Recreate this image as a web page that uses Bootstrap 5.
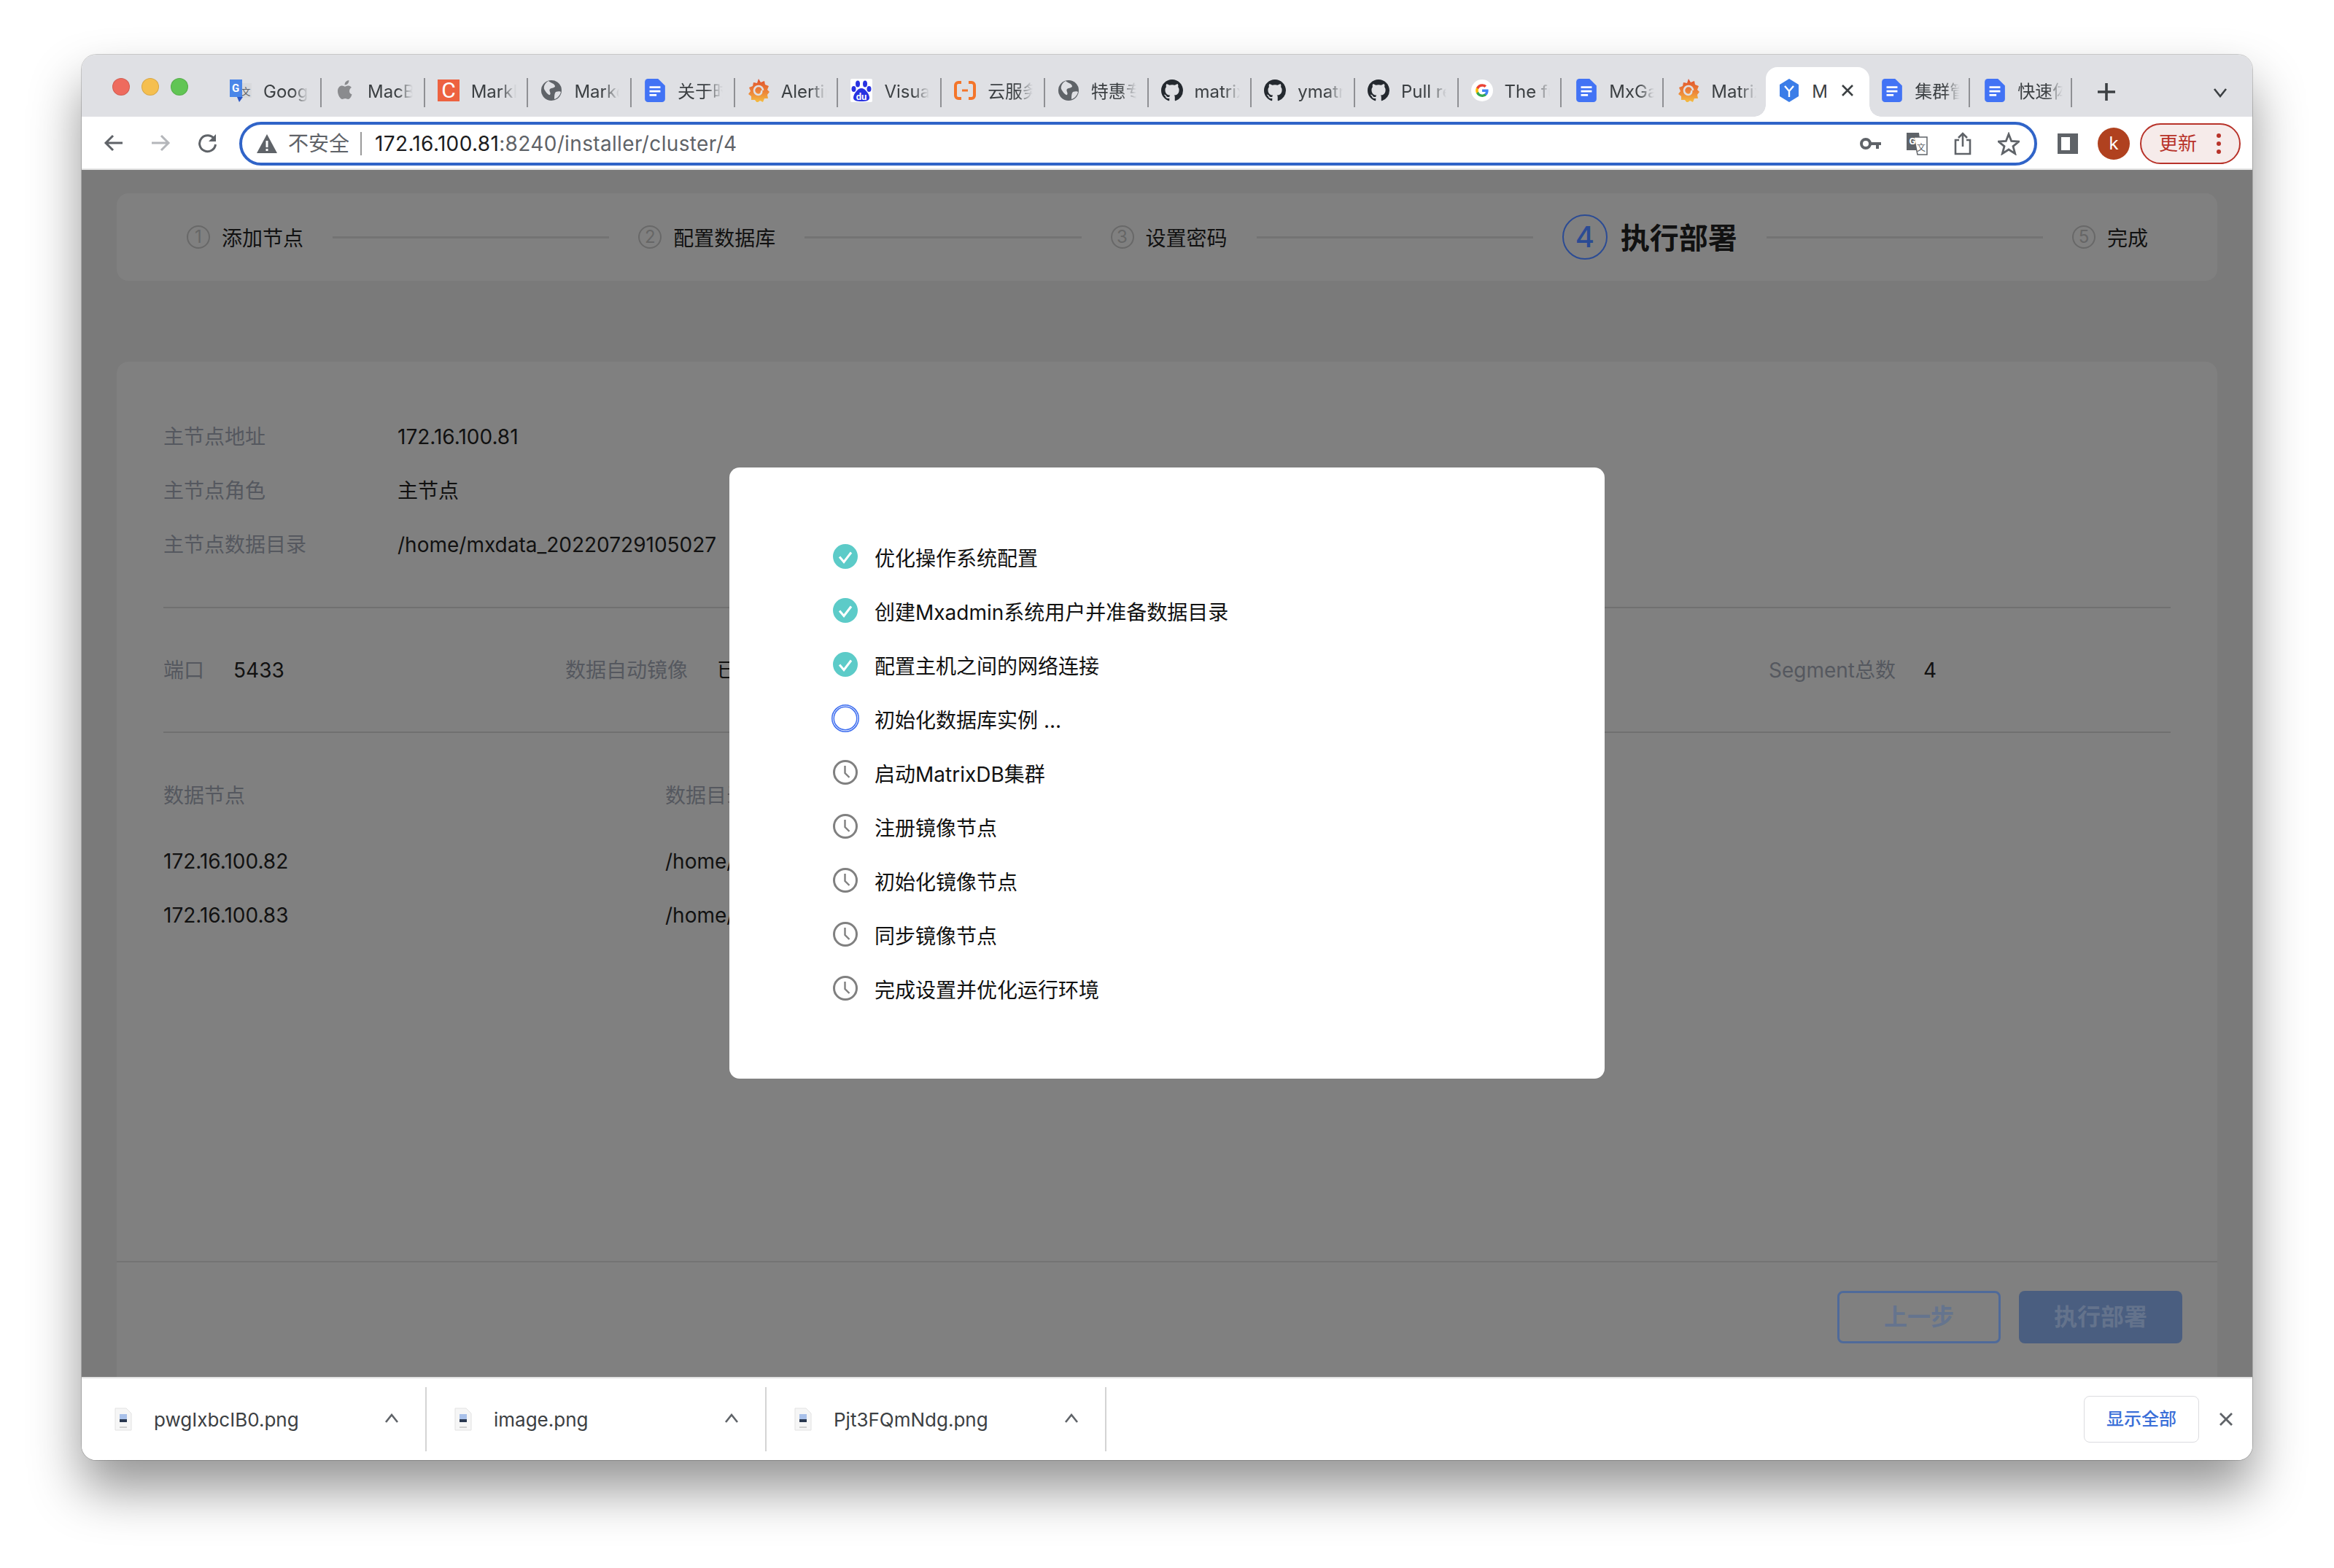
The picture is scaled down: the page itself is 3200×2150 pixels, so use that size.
<!DOCTYPE html>
<html lang="zh-CN">
<head>
  <meta charset="UTF-8" />
  <meta name="viewport" content="width=device-width, initial-scale=1" />
  <title>MatrixDB 安装</title>
  <link href="https://cdn.jsdelivr.net/npm/bootstrap@5.3.3/dist/css/bootstrap.min.css" rel="stylesheet" />
  <style>
    body {
      background: #fff;
      font-family: Inter, "Noto Sans CJK SC", sans-serif;
      color: #111;
      margin: 0;
      height: 2150px;
      overflow: hidden;
    }
    /* browser window */
    .win {
      margin: 75px 112px 0;
      height: 1927px;
      border-radius: 20px;
      overflow: hidden;
      background: #fff;
      box-shadow: 0 0 0 1px rgba(0,0,0,.18), 0 40px 70px rgba(0,0,0,.42);
    }
    .tabstrip { height: 85px; background: #dfe0e4; padding-left: 183px; flex: none; }
    .lights { left: 42px; top: 32px; gap: 16px; }
    .light { width: 24px; height: 24px; border-radius: 50%; border: 1px solid rgba(0,0,0,.12); }
    .tabitem {
      width: 141.7px;
      height: 68px;
      padding: 0 0 4px 17px;
      flex: none;
      position: relative;
      font-size: 24px;
      color: #3c4043;
    }
    .tabitem.tabfirst { width: 146px; padding-left: 20px; }
    .tabitem.slim { width: 140px; padding-left: 19px; }
    .tabitem.slimmer { width: 138px; padding-left: 16px; }
    .tabitem::after {
      content: "";
      position: absolute;
      right: 0;
      top: 15px;
      height: 40px;
      width: 2px;
      background: #8f9094;
    }
    .tabitem.nosep::after { display: none; }
    .tabfav { width: 30px; height: 32px; flex: none; margin-right: 16px; }
    .tabname {
      width: 62px;
      padding-top: 3px;
      white-space: nowrap;
      overflow: hidden;
      -webkit-mask-image: linear-gradient(to right, #000 65%, transparent 100%);
      mask-image: linear-gradient(to right, #000 65%, transparent 100%);
    }
    .tabon { background: #fff; border-radius: 16px 16px 0 0; width: 142px; padding-left: 17px; }
    .tabon::before, .tabon::after {
      content: "";
      position: absolute;
      bottom: 0;
      top: auto;
      width: 16px;
      height: 16px;
      background: radial-gradient(circle at 0 0, transparent 15.5px, #fff 16px);
    }
    .tabon::before { left: -16px; }
    .tabon::after { right: -16px; background: radial-gradient(circle at 100% 0, transparent 15.5px, #fff 16px); }
    .tabon .tabname { width: 20px; -webkit-mask-image: none; mask-image: none; }
    .tabx { width: 22px; height: 22px; margin-left: 18px; }
    .plusbtn { width: 28px; height: 28px; margin-left: 33px; margin-bottom: 20px; }
    .chevbtn { width: 22px; height: 14px; margin-left: 131px; margin-bottom: 26px; }

    /* address row */
    .addr { height: 73px; flex: none; border-bottom: 2px solid #e2e2e2; padding-left: 30px; }
    .navicon { width: 28px; height: 28px; margin-right: 36px; }
    .omni {
      width: 2465px;
      height: 60px;
      margin-top: 2px;
      border: 4px solid #3064c8;
      border-radius: 30px;
      padding: 0 20px 0 20px;
      flex: none;
      font-size: 28px;
      margin-left: -6px;
    }
    .warnicon { width: 28px; height: 26px; margin-right: 15px; }
    .notsafe { color: #5f6368; font-size: 28px; }
    .omnisep { width: 2px; height: 32px; background: #9a9a9a; margin: 0 18px 0 15px; }
    .urlmain { color: #1c1c1e; letter-spacing: .35px; }
    .urlrest { color: #5f6368; letter-spacing: .35px; }
    .omniicon { width: 30px; height: 32px; margin-left: 33px; }
    .sideicon { width: 28px; height: 28px; margin-left: 28px; margin-top: 2px; }
    .avatar {
      width: 44px; height: 44px; border-radius: 50%;
      background: #b0411f; color: #fff; font-size: 24px; margin-left: 27px; margin-top: 2px;
    }
    .updpill {
      width: 138px; height: 56px; border-radius: 28px;
      border: 2px solid #b8332a; background: #f6ebea; color: #b8332a;
      font-size: 26px; margin-left: 14px; padding-left: 24px; margin-top: 2px;
    }
    .upddots { width: 6px; height: 30px; margin-left: 27px; }

    /* dimmed page */
    .pagearea { background: #7a7a7a; padding: 32px 48px 0; flex: 1 1 0; min-height: 0; position: relative; font-size: 28px; }
    .stepcard { height: 120px; background: #808080; border-radius: 16px; padding: 0 95px 0 96px; flex: none; margin-bottom: 111px; }
    .stepnum {
      width: 32px; height: 32px; border-radius: 50%;
      border: 2px solid #686868; color: #666; font-size: 24px; flex: none; margin-right: 16px;
    }
    .stepline { flex: 1 1 0; height: 3px; background: #737373; margin: 0 40px; }
    .stepnum.on { width: 62px; height: 62px; border-color: #2b4b94; color: #2b4b94; font-size: 40px; font-weight: 500; margin-right: 18px; }
    .steptxt { white-space: nowrap; padding-top: 3px; }
    .steptxt.on { font-size: 40px; font-weight: 700; }
    .maincard { background: #808080; border-radius: 16px 16px 0 0; flex: 1 1 0; min-height: 0; }
    .cardbody { flex: 1 1 0; padding: 65px 64px 0; min-height: 0; }
    .inforow { height: 74px; padding-top: 2px; }
    .lbl { color: #55585f; }
    .lblw { width: 321px; flex: none; }
    .rule { height: 2px; background: #707070; margin-top: 49px; }
    .cfgrow { height: 169px; }
    .cfg1 { width: 551px; flex: none; gap: 40px; }
    .cfg2 { width: 1650px; flex: none; gap: 40px; }
    .cfg3 { gap: 38px; }
    .rule2 { height: 2px; background: #707070; }
    .nodecol { width: 688px; flex: none; }
    .noderow { height: 74px; padding-top: 2px; }
    .cardfoot { height: 159px; border-top: 2px solid #737373; padding: 39px 48px 0 0; flex: none; gap: 25px; }
    .stepbtn { width: 224px; height: 72px; border-radius: 8px; font-size: 32px; font-weight: 700; }
    .stepbtn.ghost { border: 3px solid #4f6a9a; color: #65748e; }
    .stepbtn.solid { background: #4a5e80; color: #64738c; }

    /* modal over the page */
    .progbox {
      position: absolute;
      left: 888px;
      top: 408px;
      width: 1200px;
      height: 838px;
      background: #fff;
      border-radius: 14px;
      padding: 85px 0 0 140px;
    }
    .progrow { height: 74px; }
    .progrow span { padding-top: 6px; }
    .progicon { width: 38px; height: 38px; margin-right: 21px; flex: none; }

    /* download shelf */
    .shelf { height: 114px; border-top: 2px solid #e2e2e2; flex: none; font-size: 26px; color: #3c4043; background: #fff; }
    .dlitem { width: 466px; height: 88px; border-right: 2px solid #d4d4d4; padding-left: 38px; flex: none; position: relative; }
    .dlitem.dlfirst { width: 473px; padding-left: 45px; }
    .dlicon { width: 24px; height: 32px; margin-right: 30px; flex: none; }
    .dlchev { position: absolute; right: 36px; top: 36px; width: 20px; height: 13px; }
    .showall {
      width: 158px; height: 64px; border: 1px solid #dcdce0; border-radius: 8px;
      color: #3b6fd8; font-size: 24px; font-weight: 500; background: #fff;
    }
    .shelfx { width: 20px; height: 20px; margin: 0 26px 0 27px; }
  </style>
</head>
<body>
  <svg width="0" height="0" class="position-absolute">
    <defs>
      <symbol id="doc" viewBox="0 0 26 30">
        <path d="M4 0h13l9 9v17a4 4 0 0 1-4 4H4a4 4 0 0 1-4-4V4a4 4 0 0 1 4-4z" fill="#4273f5"/>
        <path d="M6 11h14M6 16h14M6 21h9" stroke="#fff" stroke-width="2.6"/>
      </symbol>
      <symbol id="gh" viewBox="0 0 16 16">
        <path fill="#24292f" d="M8 0C3.58 0 0 3.58 0 8c0 3.54 2.29 6.53 5.47 7.59.4.07.55-.17.55-.38 0-.19-.01-.82-.01-1.49-2.01.37-2.53-.49-2.69-.94-.09-.23-.48-.94-.82-1.13-.28-.15-.68-.52-.01-.53.63-.01 1.08.58 1.23.82.72 1.21 1.87.87 2.33.66.07-.52.28-.87.51-1.07-1.78-.2-3.64-.89-3.64-3.95 0-.87.31-1.59.82-2.15-.08-.2-.36-1.02.08-2.12 0 0 .67-.21 2.2.82.64-.18 1.32-.27 2-.27.68 0 1.36.09 2 .27 1.53-1.04 2.2-.82 2.2-.82.44 1.1.16 1.92.08 2.12.51.56.82 1.27.82 2.15 0 3.07-1.87 3.75-3.65 3.95.29.25.54.73.54 1.48 0 1.07-.01 1.93-.01 2.2 0 .21.15.46.55.38A8.013 8.013 0 0016 8c0-4.42-3.58-8-8-8z"/>
      </symbol>
      <symbol id="globe" viewBox="0 0 30 30">
        <circle cx="15" cy="15" r="14" fill="#5f6368"/>
        <path d="M11 2c3 3 8 3 9 7 0 3-5 2-7 4-2 3 2 5 0 8-2 1-6-4-8-8-1-4 2-9 6-11zM21 17c3-1 6-1 7 0-1 5-5 9-9 10 0-4 0-8 2-10z" fill="#dfe0e4"/>
      </symbol>
      <symbol id="graf" viewBox="0 0 30 32">
        <defs><linearGradient id="grafg" x1="0" y1="0" x2="0" y2="1"><stop offset="0" stop-color="#e0502c"/><stop offset=".6" stop-color="#ee8a3a"/><stop offset="1" stop-color="#f5c242"/></linearGradient></defs>
        <path d="M15 0l3 5 5-2 1 5 5 2-2 5 3 3-3 4 1 5-5 0-2 5-4-2-4 3-3-4-5 0 0-5-4-3 3-4-2-5 5-2 1-5 5 1z" fill="url(#grafg)"/>
        <path d="M21 16a6 6 0 1 0-6 6 4.500 4.500 0 0 0 4-6" fill="none" stroke="#dfe0e4" stroke-width="2.600"/>
      </symbol>
      <symbol id="clock" viewBox="0 0 38 38">
        <circle cx="19" cy="19" r="15.500" fill="none" stroke="#808080" stroke-width="3"/>
        <path d="M18.500 10v10l6 6" fill="none" stroke="#808080" stroke-width="2.400"/>
      </symbol>
      <symbol id="done" viewBox="0 0 38 38">
        <circle cx="19" cy="19" r="17" fill="#5ccbc8"/>
        <path d="M11 19.500l6 7 10-13" fill="none" stroke="#fff" stroke-width="3"/>
      </symbol>
      <symbol id="pngfile" viewBox="0 0 24 32">
        <path d="M1 1h15l7 7v23H1z" fill="#f6f6f6" stroke="#e2e2e2"/>
        <rect x="7" y="9" width="10" height="7" fill="#a9c1ea"/>
        <rect x="7" y="16" width="10" height="4" fill="#2a3850"/>
        <rect x="7" y="26" width="10" height="2" fill="#cfcfcf"/>
      </symbol>
      <symbol id="upchev" viewBox="0 0 20 13">
        <path d="M2 12l8-10 8 10" fill="none" stroke="#5f6368" stroke-width="2.600"/>
      </symbol>
    </defs>
  </svg>

  <div class="win d-flex flex-column">
    <div class="tabstrip d-flex align-items-end position-relative">
      <div class="lights d-flex position-absolute">
        <span class="light" style="background:#ee6b5e"></span>
        <span class="light" style="background:#f5bf4f"></span>
        <span class="light" style="background:#61c554"></span>
      </div>

      <div class="tabitem tabfirst d-flex align-items-center">
        <svg class="tabfav" viewBox="0 0 30 32"><rect x="14" y="6" width="16" height="20" fill="#d8d9dc"/><text x="22" y="22" font-size="13" fill="#5f6368" text-anchor="middle" font-family="Noto Sans CJK SC">文</text><path d="M0 1h17v24H0z" fill="#4a86e8"/><path d="M10 25h8l-5 7z" fill="#2a56c6"/><text x="8" y="18" font-size="15" font-weight="700" fill="#fff" text-anchor="middle" font-family="Roboto">G</text></svg>
        <span class="tabname">Google 翻译</span>
      </div>
      <div class="tabitem d-flex align-items-center">
        <svg class="tabfav" viewBox="0 0 30 32"><path d="M21 17c0-3 2-4.500 3-5-1.500-2-3.500-2.500-4.500-2.500-2-.2-3.500 1.200-4.500 1.200s-2.400-1.200-4-1.200c-3 0-6 2.500-6 7.500 0 5 3.500 11 6.300 11 1.300 0 2.500-1 4-1s2.400 1 4 1c2.700 0 4.700-4.500 5.200-6.500-1.800-.8-3.500-2-3.500-4.500zM19 6.500c1-1.200 1.500-2.800 1.300-4.500-1.500.1-3.300 1-4.300 2.300-.9 1-1.600 2.700-1.400 4.200 1.600.1 3.300-.8 4.400-2z" fill="#8a8b8e"/></svg>
        <span class="tabname">MacBook</span>
      </div>
      <div class="tabitem d-flex align-items-center">
        <svg class="tabfav" viewBox="0 0 30 32"><rect y="1" width="30" height="30" fill="#ed6240"/><text x="15" y="26" font-size="30" fill="#fff" text-anchor="middle" font-family="Roboto">C</text></svg>
        <span class="tabname">MarkDown</span>
      </div>
      <div class="tabitem d-flex align-items-center">
        <svg class="tabfav"><use href="#globe"/></svg>
        <span class="tabname">Markdown</span>
      </div>
      <div class="tabitem d-flex align-items-center">
        <svg class="tabfav"><use href="#doc"/></svg>
        <span class="tabname">关于时序</span>
      </div>
      <div class="tabitem d-flex align-items-center">
        <svg class="tabfav"><use href="#graf"/></svg>
        <span class="tabname">Alerting</span>
      </div>
      <div class="tabitem d-flex align-items-center">
        <svg class="tabfav" viewBox="0 0 30 32"><rect width="30" height="32" rx="2" fill="#fff"/><g fill="#2932e1"><ellipse cx="10" cy="7" rx="3" ry="4.500"/><ellipse cx="20" cy="7" rx="3" ry="4.500"/><ellipse cx="4.500" cy="14" rx="3" ry="4"/><ellipse cx="25.500" cy="14" rx="3" ry="4"/><path d="M15 13c5 0 11 8 11 13 0 4-4 5-11 5s-11-1-11-5c0-5 6-13 11-13z"/></g><text x="15" y="29" font-size="13" font-weight="700" fill="#fff" text-anchor="middle" font-family="Roboto">du</text></svg>
        <span class="tabname">Visual Studio</span>
      </div>
      <div class="tabitem d-flex align-items-center">
        <svg class="tabfav" viewBox="0 0 30 32"><path d="M10 5H6a4 4 0 0 0-4 4v14a4 4 0 0 0 4 4h4M20 5h4a4 4 0 0 1 4 4v14a4 4 0 0 1-4 4h-4" fill="none" stroke="#f4752a" stroke-width="4"/><path d="M11 16h8" stroke="#f4752a" stroke-width="3"/></svg>
        <span class="tabname">云服务器</span>
      </div>
      <div class="tabitem d-flex align-items-center">
        <svg class="tabfav"><use href="#globe"/></svg>
        <span class="tabname">特惠专区</span>
      </div>
      <div class="tabitem d-flex align-items-center">
        <svg class="tabfav"><use href="#gh"/></svg>
        <span class="tabname">matrixdb</span>
      </div>
      <div class="tabitem d-flex align-items-center">
        <svg class="tabfav"><use href="#gh"/></svg>
        <span class="tabname">ymatrix</span>
      </div>
      <div class="tabitem d-flex align-items-center">
        <svg class="tabfav"><use href="#gh"/></svg>
        <span class="tabname">Pull request</span>
      </div>
      <div class="tabitem d-flex align-items-center">
        <svg class="tabfav" viewBox="0 0 48 48"><circle cx="24" cy="24" r="24" fill="#fff"/><g transform="translate(8.500 8.500) scale(.65)"><path fill="#4285F4" d="M45.120 24.500c0-1.560-.14-3.060-.4-4.500H24v8.510h11.840c-.51 2.750-2.060 5.080-4.390 6.640v5.520h7.110c4.160-3.830 6.560-9.470 6.560-16.170z"/><path fill="#34A853" d="M24 46c5.940 0 10.920-1.970 14.560-5.330l-7.110-5.520c-1.970 1.320-4.490 2.100-7.450 2.100-5.730 0-10.580-3.870-12.310-9.070H4.340v5.700C7.960 41.070 15.400 46 24 46z"/><path fill="#FBBC05" d="M11.690 28.180C11.250 26.860 11 25.450 11 24s.25-2.860.69-4.180v-5.700H4.340C2.850 17.090 2 20.450 2 24c0 3.550.85 6.910 2.340 9.880l7.350-5.700z"/><path fill="#EA4335" d="M24 10.750c3.230 0 6.130 1.110 8.410 3.290l6.310-6.310C34.910 4.180 29.930 2 24 2 15.400 2 7.960 6.930 4.340 14.120l7.350 5.700c1.730-5.200 6.580-9.070 12.310-9.070z"/></g></svg>
        <span class="tabname">The future</span>
      </div>
      <div class="tabitem slim d-flex align-items-center">
        <svg class="tabfav"><use href="#doc"/></svg>
        <span class="tabname">MxGate</span>
      </div>
      <div class="tabitem slim nosep d-flex align-items-center">
        <svg class="tabfav"><use href="#graf"/></svg>
        <span class="tabname">MatrixDB</span>
      </div>
      <div class="tabitem tabon d-flex align-items-center">
        <svg class="tabfav" viewBox="0 0 30 32"><path d="M15 0l13 8v16l-13 8-13-8V8z" fill="#3b7de8"/><path d="M9 10l6 7 6-7M15 17v8" fill="none" stroke="#fff" stroke-width="2.400"/></svg>
        <span class="tabname">MatrixDB</span>
        <svg class="tabx flex-none" viewBox="0 0 22 22"><path d="M4 4l14 14M18 4L4 18" stroke="#3c4043" stroke-width="2.600"/></svg>
      </div>
      <div class="tabitem slimmer d-flex align-items-center">
        <svg class="tabfav"><use href="#doc"/></svg>
        <span class="tabname">集群管理</span>
      </div>
      <div class="tabitem slim d-flex align-items-center">
        <svg class="tabfav"><use href="#doc"/></svg>
        <span class="tabname">快速体验</span>
      </div>
      <svg class="plusbtn align-self-end flex-none" viewBox="0 0 28 28"><path d="M14 2v24M2 14h24" stroke="#3c4043" stroke-width="3.600"/></svg>
      <svg class="chevbtn align-self-end flex-none" viewBox="0 0 22 14"><path d="M3 2l8 10 8-10" fill="none" stroke="#3c4043" stroke-width="2.600"/></svg>
    </div>

    <div class="addr d-flex align-items-center">
      <svg class="navicon flex-none" viewBox="0 0 28 28"><path d="M26 14H4M13 4L3 14l10 10" fill="none" stroke="#5f6368" stroke-width="3"/></svg>
      <svg class="navicon flex-none" viewBox="0 0 28 28"><path d="M2 14h22M15 4l10 10-10 10" fill="none" stroke="#b4b6ba" stroke-width="3"/></svg>
      <svg class="navicon flex-none" viewBox="0 0 28 28"><path d="M24 9a11 11 0 1 0 1.500 7" fill="none" stroke="#5f6368" stroke-width="3"/><path d="M26 2v10H16z" fill="#5f6368"/></svg>
      <div class="omni d-flex align-items-center">
        <svg class="warnicon flex-none" viewBox="0 0 28 26"><path d="M14 0l14 26H0z" fill="#5f6368"/><path d="M14 9v9M14 20v3" stroke="#fff" stroke-width="3"/></svg>
        <span class="notsafe">不安全</span>
        <span class="omnisep"></span>
        <span class="urlmain">172.16.100.81</span><span class="urlrest">:8240/installer/cluster/4</span>
        <div class="ms-auto d-flex align-items-center">
          <svg class="omniicon" viewBox="0 0 30 32"><circle cx="8" cy="16" r="6" fill="none" stroke="#5f6368" stroke-width="4"/><path d="M13 14h16v4h-3v5h-4v-5h-9z" fill="#5f6368"/></svg>
          <svg class="omniicon" viewBox="0 0 30 32"><path d="M1 1h17l3 24H1z" fill="#5f6368"/><path d="M11 7h18v24H16z" fill="#fff" stroke="#5f6368" stroke-width="1.500"/><text x="9" y="17" font-size="13" font-weight="700" fill="#fff" text-anchor="middle" font-family="Roboto">G</text><text x="21" y="26" font-size="12" fill="#5f6368" text-anchor="middle" font-family="Noto Sans CJK SC">文</text></svg>
          <svg class="omniicon" viewBox="0 0 30 32"><path d="M10 11H5v19h20V11h-5M15 20V2M9 8l6-6 6 6" fill="none" stroke="#5f6368" stroke-width="2.600"/></svg>
          <svg class="omniicon" viewBox="0 0 30 32"><path d="M15 3l3.700 9.500 10.300.6-8 6.500 2.700 10L15 24l-8.700 5.600 2.700-10-8-6.500 10.300-.6z" fill="none" stroke="#5f6368" stroke-width="2.800"/></svg>
        </div>
      </div>
      <svg class="sideicon flex-none" viewBox="0 0 28 28"><rect x="2.500" y="2.500" width="23" height="23" fill="none" stroke="#5f6368" stroke-width="5"/><rect x="17" y="2" width="9" height="24" fill="#5f6368"/></svg>
      <div class="avatar d-flex align-items-center justify-content-center flex-none">k</div>
      <div class="updpill d-flex align-items-center flex-none">
        <span>更新</span>
        <svg class="upddots flex-none" viewBox="0 0 6 30"><circle cx="3" cy="4" r="3" fill="#b8332a"/><circle cx="3" cy="15" r="3" fill="#b8332a"/><circle cx="3" cy="26" r="3" fill="#b8332a"/></svg>
      </div>
    </div>

    <div class="pagearea d-flex flex-column">
      <div class="stepcard d-flex align-items-center">
        <span class="stepnum d-flex align-items-center justify-content-center">1</span>
        <span class="steptxt">添加节点</span>
        <span class="stepline"></span>
        <span class="stepnum d-flex align-items-center justify-content-center">2</span>
        <span class="steptxt">配置数据库</span>
        <span class="stepline"></span>
        <span class="stepnum d-flex align-items-center justify-content-center">3</span>
        <span class="steptxt">设置密码</span>
        <span class="stepline"></span>
        <span class="stepnum on d-flex align-items-center justify-content-center">4</span>
        <span class="steptxt on">执行部署</span>
        <span class="stepline"></span>
        <span class="stepnum d-flex align-items-center justify-content-center">5</span>
        <span class="steptxt">完成</span>
      </div>

      <div class="maincard d-flex flex-column">
        <div class="cardbody">
          <div class="inforow d-flex align-items-center"><span class="lbl lblw">主节点地址</span><span>172.16.100.81</span></div>
          <div class="inforow d-flex align-items-center"><span class="lbl lblw">主节点角色</span><span>主节点</span></div>
          <div class="inforow d-flex align-items-center"><span class="lbl lblw">主节点数据目录</span><span>/home/mxdata_20220729105027</span></div>
          <div class="rule"></div>
          <div class="cfgrow d-flex align-items-center">
            <div class="cfg1 d-flex"><span class="lbl">端口</span><span>5433</span></div>
            <div class="cfg2 d-flex"><span class="lbl">数据自动镜像</span><span>已开启</span></div>
            <div class="cfg3 d-flex"><span class="lbl">Segment总数</span><span>4</span></div>
          </div>
          <div class="rule2"></div>
          <div class="d-flex align-items-center noderow mt-5"><span class="lbl nodecol">数据节点</span><span class="lbl">数据目录</span></div>
          <div class="d-flex align-items-center noderow mt-3"><span class="nodecol">172.16.100.82</span><span>/home/mxdata</span></div>
          <div class="d-flex align-items-center noderow"><span class="nodecol">172.16.100.83</span><span>/home/mxdata</span></div>
        </div>
        <div class="cardfoot d-flex justify-content-end">
          <div class="stepbtn ghost d-flex align-items-center justify-content-center">上一步</div>
          <div class="stepbtn solid d-flex align-items-center justify-content-center">执行部署</div>
        </div>
      </div>

      <div class="progbox">
        <div class="progrow d-flex align-items-center"><svg class="progicon"><use href="#done"/></svg><span>优化操作系统配置</span></div>
        <div class="progrow d-flex align-items-center"><svg class="progicon"><use href="#done"/></svg><span>创建Mxadmin系统用户并准备数据目录</span></div>
        <div class="progrow d-flex align-items-center"><svg class="progicon"><use href="#done"/></svg><span>配置主机之间的网络连接</span></div>
        <div class="progrow d-flex align-items-center">
          <svg class="progicon" viewBox="0 0 38 38"><circle cx="19" cy="19" r="17" fill="none" stroke="#3f6ff0" stroke-width="4"/><circle cx="19" cy="19" r="17" fill="none" stroke="#fff" stroke-width="1"/></svg>
          <span>初始化数据库实例 ...</span>
        </div>
        <div class="progrow d-flex align-items-center"><svg class="progicon"><use href="#clock"/></svg><span>启动MatrixDB集群</span></div>
        <div class="progrow d-flex align-items-center"><svg class="progicon"><use href="#clock"/></svg><span>注册镜像节点</span></div>
        <div class="progrow d-flex align-items-center"><svg class="progicon"><use href="#clock"/></svg><span>初始化镜像节点</span></div>
        <div class="progrow d-flex align-items-center"><svg class="progicon"><use href="#clock"/></svg><span>同步镜像节点</span></div>
        <div class="progrow d-flex align-items-center"><svg class="progicon"><use href="#clock"/></svg><span>完成设置并优化运行环境</span></div>
      </div>
    </div>

    <div class="shelf d-flex align-items-center">
      <div class="dlitem dlfirst d-flex align-items-center"><svg class="dlicon"><use href="#pngfile"/></svg><span>pwgIxbcIB0.png</span><svg class="dlchev"><use href="#upchev"/></svg></div>
      <div class="dlitem d-flex align-items-center"><svg class="dlicon"><use href="#pngfile"/></svg><span>image.png</span><svg class="dlchev"><use href="#upchev"/></svg></div>
      <div class="dlitem d-flex align-items-center"><svg class="dlicon"><use href="#pngfile"/></svg><span>Pjt3FQmNdg.png</span><svg class="dlchev"><use href="#upchev"/></svg></div>
      <div class="showall d-flex align-items-center justify-content-center ms-auto">显示全部</div>
      <svg class="shelfx flex-none" viewBox="0 0 20 20"><path d="M2 2l16 16M18 2L2 18" stroke="#5f6368" stroke-width="2.800"/></svg>
    </div>
  </div>

  <script src="https://cdn.jsdelivr.net/npm/bootstrap@5.3.3/dist/js/bootstrap.bundle.min.js"></script>
</body>
</html>
